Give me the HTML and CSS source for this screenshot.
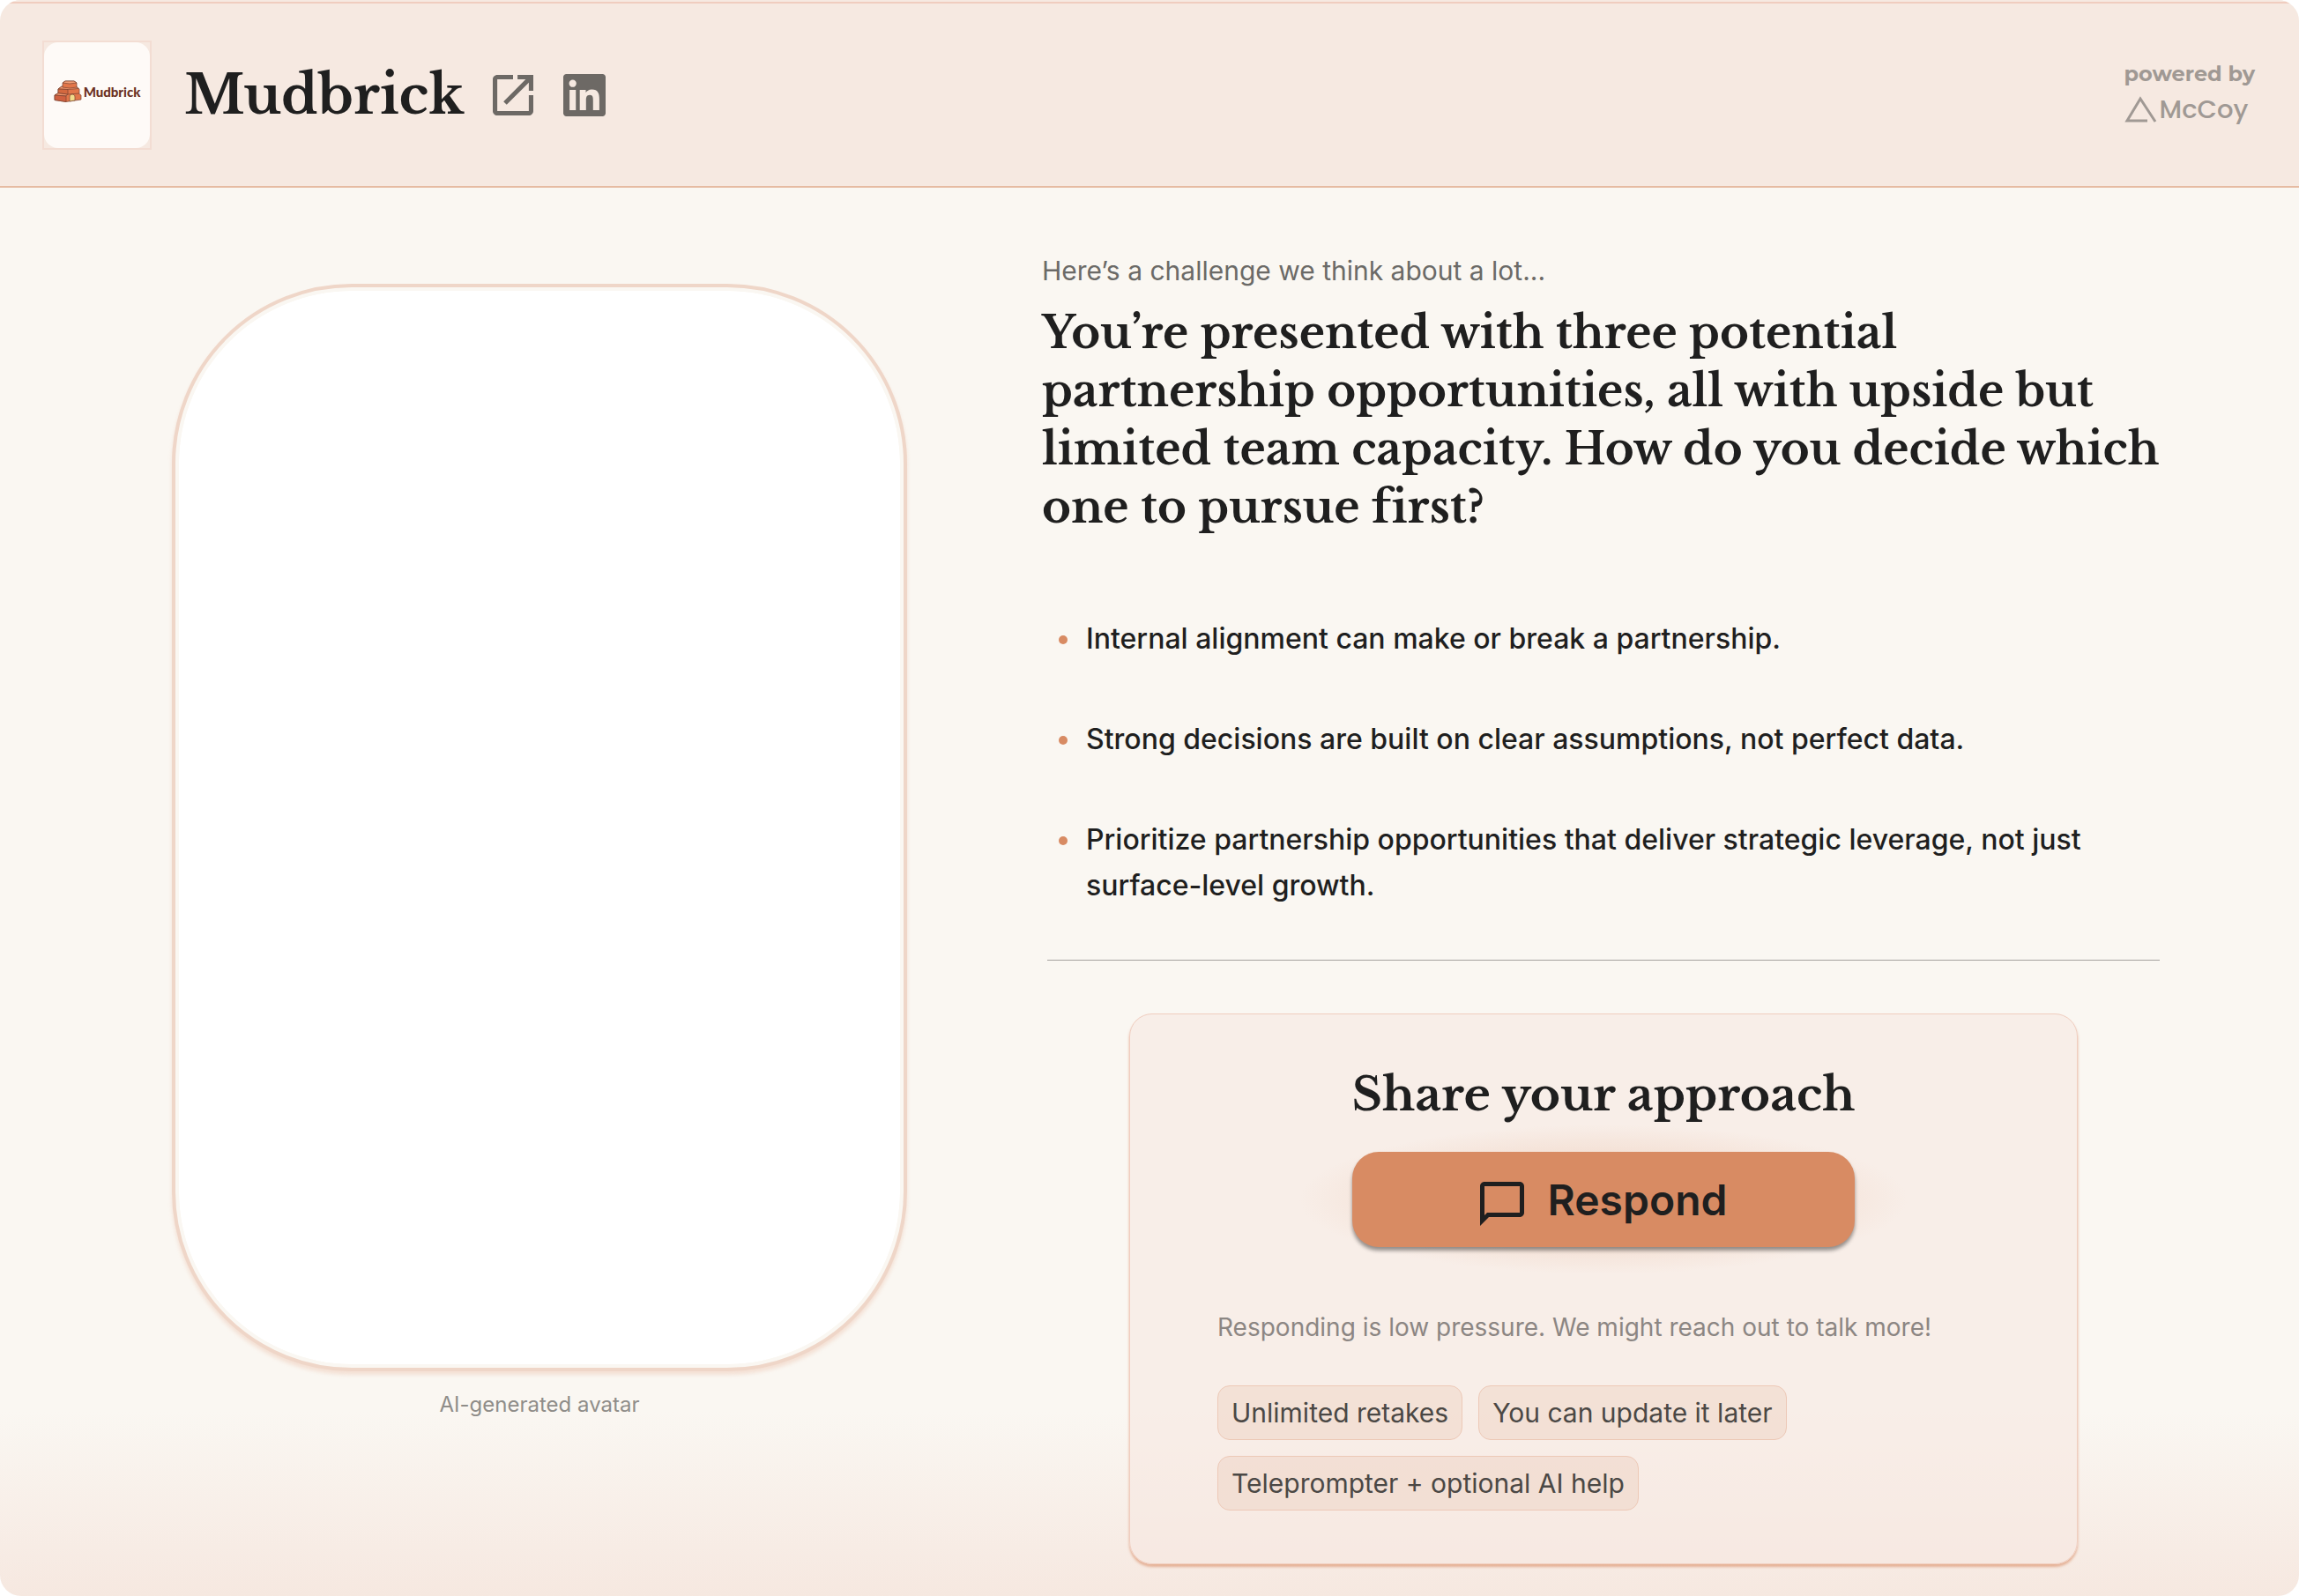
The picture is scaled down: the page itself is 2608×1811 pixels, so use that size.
FILE: index.html
```html
<!DOCTYPE html>
<html lang="en">
<head>
    <meta charset="UTF-8">
    <meta name="viewport" content="width=device-width, initial-scale=1.0">
    <title>Mudbrick</title>
    <link rel="stylesheet" href="styles.css">
</head>
<body>
    <div class="page">
        <header class="header">
            <div class="logo">
                <div class="logo-tile">
                    <svg class="logo-mark" viewBox="0 0 32 25" aria-hidden="true">
                        <g stroke="#7a4230" stroke-width="0.700" stroke-linejoin="round">
                            <path d="M1 17l5-3h21l4 3v5l-17 2.500L1 22.500z" fill="#e2764a"/>
                            <path d="M1 17l5-3h11l-3 4z" fill="#f0966c"/>
                            <path d="M1 17l13 1v6.500L1 22.500z" fill="#cf6040"/>
                            <path d="M5 10l4-3h16l4 3v5l-13 1-11-1.500z" fill="#e2764a"/>
                            <path d="M5 10l4-3h16l3 2.500-12 1z" fill="#f0966c"/>
                            <path d="M5 10l11 .5V16L5 14.500z" fill="#d4683f"/>
                            <path d="M10 3l3-2h10l3 2v5l-8 1-8-1z" fill="#e2764a"/>
                            <path d="M10 3l3-2h10l3 2-8 1z" fill="#f3a078"/>
                            <path d="M18 24v-5c0-4 6-4 6 0v4z" fill="#f3dc8c"/>
                        </g>
                    </svg>
                    <span class="logo-text">Mudbrick</span>
                </div>
            </div>
            <h1>Mudbrick</h1>
            <nav class="links">
                <a href="#website" aria-label="Website">
                    <svg class="icon-open" viewBox="3 3 18 18"><path fill="currentColor" d="M19 19H5V5h7V3H5c-1.110 0-2 .9-2 2v14c0 1.100.89 2 2 2h14c1.100 0 2-.9 2-2v-7h-2v7zM14 3v2h3.590l-9.830 9.830 1.410 1.410L19 6.410V10h2V3h-7z"/></svg>
                </a>
                <a href="#linkedin" aria-label="LinkedIn">
                    <svg class="icon-linkedin" viewBox="0 0 24 24"><path fill="currentColor" d="M20.450 20.450h-3.560v-5.570c0-1.330-.02-3.040-1.850-3.040-1.850 0-2.140 1.450-2.140 2.940v5.670H9.350V9h3.410v1.560h.05c.48-.9 1.640-1.850 3.370-1.850 3.600 0 4.270 2.370 4.270 5.460v6.280zM5.340 7.430a2.060 2.060 0 1 1 0-4.130 2.060 2.060 0 0 1 0 4.130zM7.120 20.450H3.550V9h3.570v11.450zM22.220 0H1.770C.79 0 0 .77 0 1.730v20.540C0 23.230.79 24 1.770 24h20.450c.98 0 1.780-.77 1.780-1.730V1.730C24 .77 23.200 0 22.220 0z"/></svg>
                </a>
            </nav>
            <div class="powered">
                <span>powered by</span>
                <span class="mccoy">
                    <svg class="mccoy-mark" viewBox="0 0 37 30" aria-hidden="true"><path d="M26 28H3L18 3l17 26" fill="none" stroke="currentColor" stroke-width="3"/></svg>
                    McCoy
                </span>
            </div>
        </header>

        <main class="content">
            <figure class="avatar">
                <div class="avatar-frame"></div>
                <figcaption>AI-generated avatar</figcaption>
            </figure>

            <section class="challenge">
                <p class="intro">Here’s a challenge we think about a lot...</p>
                <h2>You’re presented with three potential partnership opportunities, all with upside but limited team capacity. How do you decide which one to pursue first?</h2>
                <ul class="tips">
                    <li>Internal alignment can make or break a partnership.</li>
                    <li>Strong decisions are built on clear assumptions, not perfect data.</li>
                    <li>Prioritize partnership opportunities that deliver strategic leverage, not just surface-level growth.</li>
                </ul>
                <div class="response">
                    <div class="card">
                        <h3>Share your approach</h3>
                        <div class="glow">
                            <button type="button" class="respond">
                                <svg class="icon-chat" viewBox="2 -2 20 24" aria-hidden="true"><path fill="currentColor" d="M20 2H4c-1.100 0-2 .9-2 2v18l4-4h14c1.100 0 2-.9 2-2V4c0-1.100-.9-2-2-2zm0 14H5.200L4 17.200V4h16v12z"/></svg>
                                Respond
                            </button>
                        </div>
                        <p class="note">Responding is low pressure. We might reach out to talk more!</p>
                        <ul class="chips">
                            <li>Unlimited retakes</li>
                            <li>You can update it later</li>
                            <li>Teleprompter + optional AI help</li>
                        </ul>
                    </div>
                </div>
            </section>
        </main>
    </div>
</body>
</html>
```
FILE: styles.css
```css
* {
    box-sizing: border-box;
}
body {
    margin: 0;
    background-color: #fff;
    font-family: Inter, "Liberation Sans", sans-serif;
    color: #1f1f1f;
}
h1, h2, h3 {
    margin: 0;
    font-family: "Libre Baskerville", "Liberation Serif", serif;
    font-weight: 700;
    font-variant-ligatures: none;
}
p, ul, figure {
    margin: 0;
    padding: 0;
}
ul {
    list-style: none;
}
svg {
    display: block;
}
.page {
    min-height: 100vh;
    border-radius: 24px;
    overflow: hidden;
    background: linear-gradient(to top, #f6e8e0, rgba(246, 232, 224, 0) 210px) #faf7f2;
}

/* header */
.header {
    display: flex;
    align-items: center;
    height: 213px;
    padding: 2px 50px 0 48px;
    background-color: #f6e9e1;
    border-top: 2px solid #f6e9e1;
    border-bottom: 2px solid #e6bba2;
    box-shadow: inset 0 2px 0 #f0cdbf;
}
.logo {
    width: 124px;
    height: 124px;
    border: 2px solid #f3ddd3;
}
.logo-tile {
    display: flex;
    align-items: center;
    justify-content: center;
    gap: 2px;
    height: 100%;
    padding-bottom: 8px;
    background-color: #fefaf7;
    border-radius: 16px;
}
.logo-mark {
    width: 32px;
    height: 25px;
}
.logo-text {
    font-family: Lato, sans-serif;
    font-weight: 900;
    font-size: 15px;
    color: #6b3021;
}
.header h1 {
    margin-left: 37px;
    font-size: 60px;
    line-height: 88px;
}
.links {
    display: flex;
    align-items: center;
    gap: 34px;
    margin-left: 33px;
}
.links a {
    color: #6d6965;
}
.icon-open {
    width: 46px;
    height: 46px;
}
.icon-linkedin {
    width: 48px;
    height: 48px;
}
.powered {
    margin-left: auto;
    padding-bottom: 8px;
    font-family: Montserrat, Lato, sans-serif;
    font-weight: 700;
    font-size: 24px;
    line-height: 40px;
    color: #a09994;
}
.mccoy {
    display: flex;
    align-items: center;
    gap: 3px;
    font-family: Poppins, Montserrat, sans-serif;
    font-weight: 500;
    font-size: 29px;
}
.mccoy-mark {
    width: 37px;
    height: 30px;
}

/* content */
.content {
    display: grid;
    grid-template-columns: 834fr 1268fr;
    column-gap: 153px;
    padding: 72px 158px 34px 195px;
}
.avatar {
    padding-top: 37px;
    text-align: center;
}
.avatar-frame {
    aspect-ratio: 834 / 1234;
    padding: 4px;
    border: 4px solid #efd6c8;
    border-radius: 204px;
    background-color: #fff;
    background-clip: content-box;
    box-shadow: 0 4px 4px rgba(236, 190, 168, 0.4), inset 0 0 0 4px #faf7f2;
}
.avatar figcaption {
    margin-top: 20px;
    font-size: 24px;
    line-height: 36px;
    color: #8f8d89;
}
.intro {
    font-size: 30px;
    line-height: 44px;
    color: #6b6a67;
}
.challenge h2 {
    margin-top: 16px;
    font-size: 50px;
    line-height: 66px;
}
.tips {
    display: grid;
    gap: 62px;
    margin: 90px 0 58px;
}
.tips li {
    display: flex;
    gap: 21px;
    padding-left: 19px;
    font-size: 32px;
    font-weight: 500;
    line-height: 52px;
}
.tips li::before {
    content: "";
    flex: none;
    width: 10px;
    height: 10px;
    margin-top: 22px;
    border-radius: 50%;
    background-color: #d88b63;
}

/* response card */
.response {
    margin-left: 6px;
    padding-top: 60px;
    border-top: 1px solid #a5a29e;
}
.card {
    max-width: 1076px;
    margin: 0 auto;
    padding: 57px 99px 60px;
    border: 1px solid #f0cdbf;
    border-radius: 26px;
    background-color: rgba(247, 231, 225, 0.6);
    box-shadow: 0 3px 3px rgba(216, 139, 98, 0.6);
}
.card h3 {
    font-size: 52px;
    line-height: 68px;
    text-align: center;
}
.glow {
    width: 690px;
    max-width: 100%;
    margin: 0 auto;
    padding: 31px 60px;
    background: radial-gradient(closest-side, #f0cfbc, rgba(243, 221, 208, 0.8) 60%, rgba(246, 232, 224, 0));
}
.respond {
    display: flex;
    align-items: center;
    justify-content: center;
    gap: 27px;
    width: 100%;
    height: 108px;
    border: 0;
    border-radius: 30px;
    background-color: #d88b63;
    box-shadow: 0 4px 4px rgba(0, 0, 0, 0.4);
    font-family: inherit;
    font-size: 48px;
    font-weight: 600;
    color: #1f1f1f;
    cursor: pointer;
}
.icon-chat {
    width: 50px;
    height: 60px;
}
.note {
    margin-top: 40px;
    font-size: 28px;
    line-height: 40px;
    color: #8c8683;
}
.chips {
    display: flex;
    flex-wrap: wrap;
    gap: 18px;
    margin-top: 46px;
}
.chips li {
    padding: 0 15px;
    border: 1px solid #edc9b7;
    border-radius: 14px;
    background-color: rgba(236, 205, 187, 0.4);
    font-size: 30px;
    line-height: 60px;
    color: #4b4845;
}
```
